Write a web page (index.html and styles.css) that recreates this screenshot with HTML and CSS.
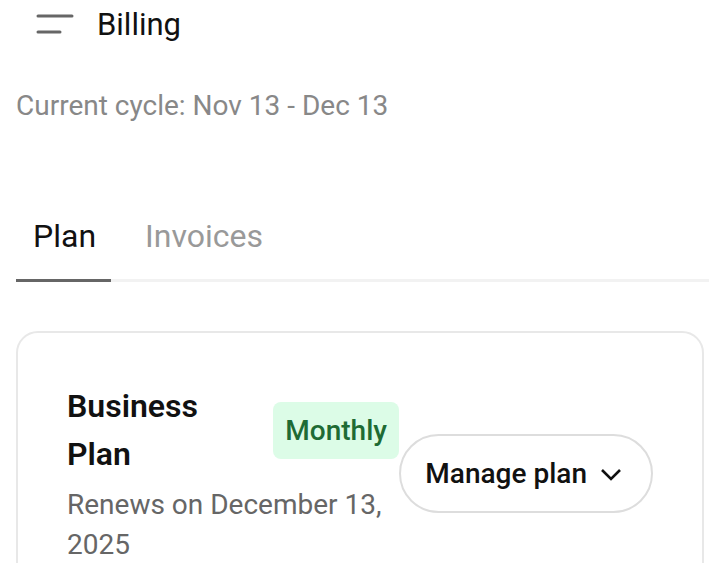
FILE: index.html
```html
<!DOCTYPE html>
<html lang="en">

<head>
    <meta charset="UTF-8">
    <meta name="viewport" content="width=device-width, initial-scale=1.0">
    <title>Billing</title>
    <link rel="stylesheet" href="styles.css">
</head>

<body>
    <div class="page">
        <div class="topbar">
            <button class="menu-btn" aria-label="Menu">
                <svg width="38" height="22" viewBox="0 0 38 22">
                    <line x1="2" y1="3" x2="36" y2="3" stroke="#666" stroke-width="3" stroke-linecap="round" />
                    <line x1="2" y1="19" x2="24" y2="19" stroke="#666" stroke-width="3" stroke-linecap="round" />
                </svg>
            </button>
            <h1 class="title">Billing</h1>
        </div>

        <p class="cycle">Current cycle: Nov 13 - Dec 13</p>

        <div class="tabs">
            <div class="tab active">Plan</div>
            <div class="tab">Invoices</div>
        </div>

        <div class="card">
            <div class="plan-info">
                <div class="plan-head">
                    <h2 class="plan-name">Business Plan</h2>
                    <span class="badge">Monthly</span>
                </div>
                <p class="renews">Renews on December 13, 2025</p>
            </div>
            <button class="manage-btn">
                Manage plan
                <svg width="22" height="14" viewBox="0 0 22 14">
                    <polyline points="2,3 11,12 20,3" fill="none" stroke="#111" stroke-width="2.6" />
                </svg>
            </button>
        </div>
    </div>
</body>

</html>
```

FILE: styles.css
```css
* {
    box-sizing: border-box;
}

body {
    margin: 0;
    font-family: Roboto, "Noto Sans", sans-serif;
    background-color: white;
    color: #111;
    overflow: hidden;
}

.page {
    padding: 0 5px 0 16px;
}

.topbar {
    display: flex;
    align-items: center;
    height: 48px;
}

.menu-btn {
    border: none;
    background: none;
    padding: 0;
    margin-left: 20px;
    width: 38px;
    height: 22px;
    display: flex;
}

.title {
    margin: 0 0 0 23px;
    font-size: 31px;
    font-weight: 400;
    color: #111;
}

.cycle {
    margin: 34px 0 0 0;
    font-size: 28px;
    color: #888;
    line-height: 48px;
}

.tabs {
    display: flex;
    margin-top: 63px;
    border-bottom: 3px solid #f2f2f2;
    margin-right: -5px;
}

.tab {
    font-size: 32px;
    color: #999;
    padding: 0 15px 0 17px;
    height: 89px;
    display: flex;
    align-items: center;
    margin-bottom: -3px;
    border-bottom: 3px solid transparent;
}

.tab.active {
    color: #111;
    border-bottom-color: #666;
}

.tab + .tab {
    padding-left: 34px;
}

.card {
    margin-top: 49px;
    border: 2px solid #e8e8e8;
    border-radius: 22px;
    padding: 49px 49px 40px 49px;
    display: flex;
    align-items: center;
    justify-content: space-between;
}

.plan-info {
    flex: 0 0 332px;
}

.plan-head {
    display: flex;
    align-items: center;
    gap: 8px;
}

.plan-name {
    margin: 0;
    flex: 1;
    font-size: 32px;
    font-weight: 600;
    line-height: 48px;
}

.badge {
    background-color: #dcfce7;
    color: #1e6b34;
    font-size: 28px;
    font-weight: 500;
    border-radius: 8px;
    padding: 12px 12px;
}

.renews {
    margin: 7px 0 0 0;
    font-size: 28px;
    color: #666;
    line-height: 40px;
}

.manage-btn {
    flex-shrink: 0;
    white-space: nowrap;
    display: flex;
    align-items: center;
    gap: 13px;
    font-family: inherit;
    font-size: 28px;
    font-weight: 500;
    color: #111;
    background: white;
    border: 2px solid #ddd;
    border-radius: 40px;
    height: 79px;
    padding: 0 29px 0 24px;
}
```
